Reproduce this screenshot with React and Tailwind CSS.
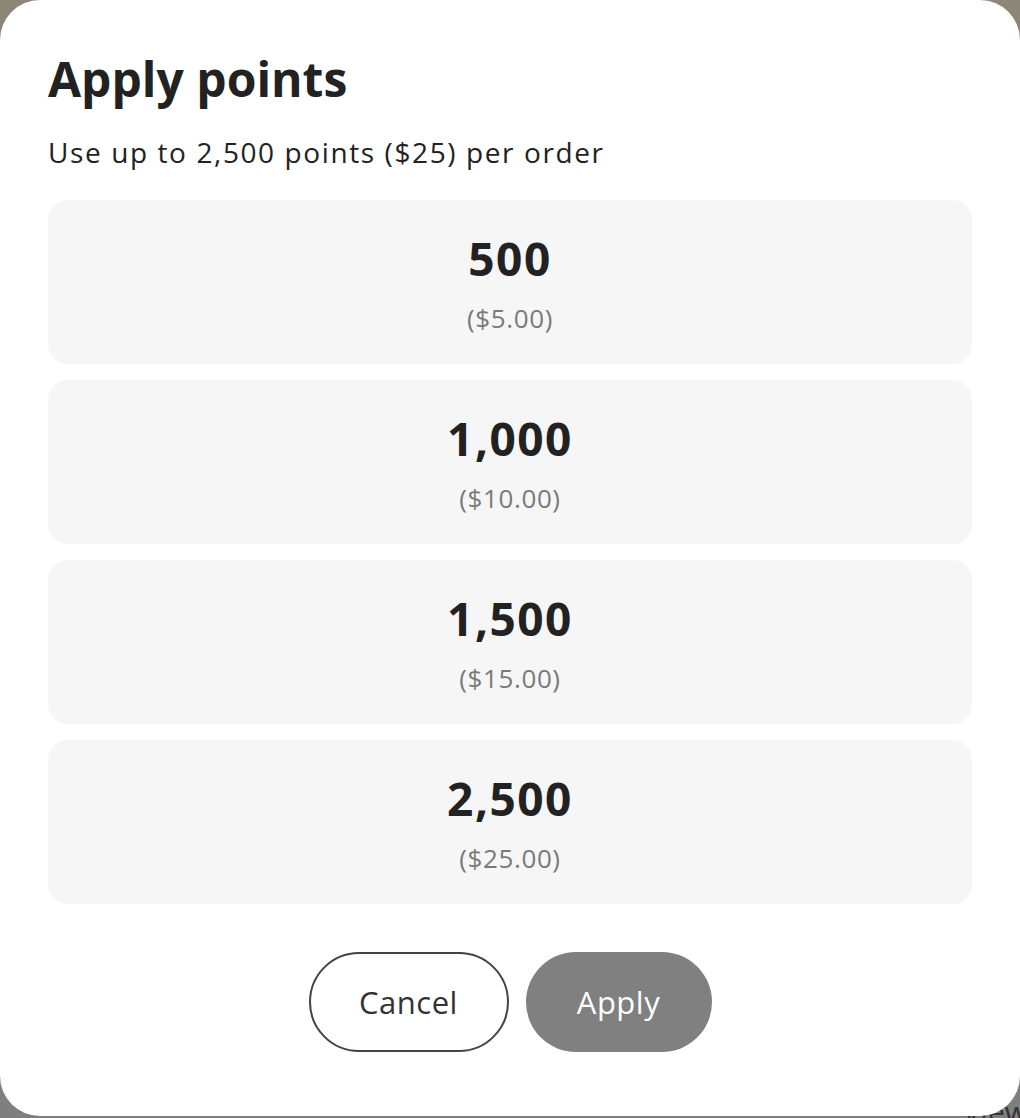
export default function App() {
	const options = [
		{ pts: "500", usd: "($5.00)" },
		{ pts: "1,000", usd: "($10.00)" },
		{ pts: "1,500", usd: "($15.00)" },
		{ pts: "2,500", usd: "($25.00)" },
	];

	return (
		<div
			className="relative w-[1020px] h-[1118px] overflow-hidden bg-gradient-to-b from-[#8b8676] via-[#858380] to-[#7f7f7f]"
			style={{ fontFamily: "'Open Sans', 'Noto Sans', sans-serif" }}
		>
			{/* background page text peeking out */}
			<span className="absolute right-[-8px] bottom-[-16px] text-[30px] text-[#333]">View</span>

			<div className="relative h-[1116px] bg-white rounded-[40px] px-12 pt-[49px]">
				<h1 className="text-[48px] leading-[60px] font-bold text-[#222]">Apply points</h1>
				<p className="mt-[25px] text-[28px] leading-[36px] tracking-[1.6px] text-[#222]">
					Use up to 2,500 points ($25) per order
				</p>

				<div className="mt-[30px] flex flex-col gap-4">
					{options.map((o) => (
						<button
							key={o.pts}
							className="h-[164px] w-full rounded-[20px] bg-[#f6f6f6] flex flex-col items-center pt-[32px]"
						>
							<span className="text-[46px] leading-[52px] font-bold tracking-[1.5px] text-[#222]">{o.pts}</span>
							<span className="mt-[18px] text-[26px] leading-[32px] tracking-[0.6px] text-[#7a7a7a]">{o.usd}</span>
						</button>
					))}
				</div>

				<div className="mt-[48px] flex justify-center gap-[17px]">
					<button className="w-[200px] h-[100px] rounded-full border-2 border-[#444] text-[31px] tracking-[0.5px] text-[#333]">
						Cancel
					</button>
					<button className="w-[186px] h-[100px] rounded-full bg-[#808080] text-[31px] tracking-[0.5px] text-white">
						Apply
					</button>
				</div>
			</div>
		</div>
	);
}
